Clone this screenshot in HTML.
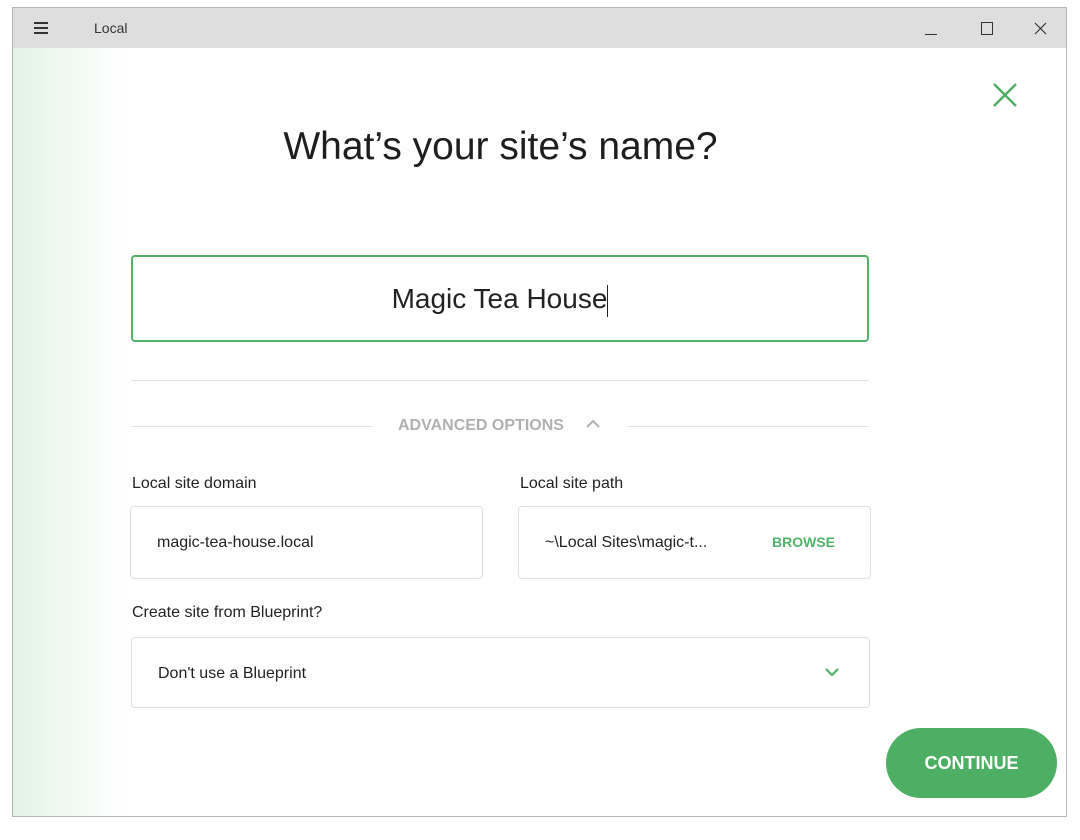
<!DOCTYPE html>
<html><head><style>
body{margin:0;width:1080px;height:840px;background:#fff;font-family:"Liberation Sans",sans-serif;position:relative;overflow:hidden}
.win{position:absolute;left:12px;top:7px;width:1055px;height:810px;border:1px solid #b5b5b5;box-sizing:border-box;background:#fff;overflow:hidden}
.tb{position:absolute;left:0;top:0;right:0;height:40px;background:#dedede}
.grad{position:absolute;left:0;top:40px;width:112px;bottom:0;background:linear-gradient(to right,#e3f3e6,#fff)}
.a{position:absolute}
.lbl{font-size:16px;color:#222}
.box{position:absolute;border:1px solid #e0e0e0;border-radius:4px;box-sizing:border-box;background:#fff}
</style></head><body>
<div class="win">
<div class="tb">
<div class="a" style="left:21px;top:14px;width:14px;height:2px;background:#333;box-shadow:0 5px 0 #333,0 10px 0 #333"></div>
<div class="a" style="left:81px;top:12px;font-size:14px;color:#333">Local</div>
<div class="a" style="left:912px;top:26px;width:12px;height:1px;background:#333"></div>
<div class="a" style="left:968px;top:14px;width:10px;height:11px;border:1px solid #333"></div>
<svg class="a" style="left:1021px;top:14px" width="13" height="13"><path d="M1 1L12 12M12 1L1 12" stroke="#333" stroke-width="1.2"/></svg>
</div>
<div class="grad"></div>
<svg class="a" style="left:979px;top:74px" width="26" height="26"><path d="M2 2L24 24M24 2L2 24" stroke="#4caf64" stroke-width="2.4"/></svg>
<div class="a" style="left:0;width:975px;text-align:center;top:117px;font-size:39px;color:#1e1e1e">What’s your site’s name?</div>
<div class="a" style="left:118px;top:247px;width:738px;height:87px;border:2px solid #51b36a;border-radius:4px;box-sizing:border-box;text-align:center;line-height:83px;font-size:28px;color:#222">Magic Tea House<span style="display:inline-block;width:1px;height:32px;background:#222;vertical-align:middle"></span></div>
<div class="a" style="left:118px;top:372px;width:738px;height:1px;background:#e2e2e2"></div>
<div class="a" style="left:118px;top:418px;width:241px;height:1px;background:#e2e2e2"></div>
<div class="a" style="left:615px;top:418px;width:241px;height:1px;background:#e2e2e2"></div>
<div class="a" style="left:385px;top:409px;font-size:16px;font-weight:bold;color:#b0b0b0">ADVANCED OPTIONS</div>
<svg class="a" style="left:572px;top:411px" width="16" height="10"><path d="M2 8L8 2L14 8" stroke="#b0b0b0" stroke-width="2" fill="none"/></svg>
<div class="a lbl" style="left:119px;top:467px">Local site domain</div>
<div class="a lbl" style="left:507px;top:467px">Local site path</div>
<div class="box" style="left:117px;top:498px;width:353px;height:73px"><span class="a lbl" style="left:26px;top:27px">magic-tea-house.local</span></div>
<div class="box" style="left:505px;top:498px;width:353px;height:73px"><span class="a lbl" style="left:26px;top:27px">~\Local Sites\magic-t...</span><span class="a" style="left:253px;top:27px;font-size:14px;font-weight:bold;color:#51b36a">BROWSE</span></div>
<div class="a lbl" style="left:119px;top:596px">Create site from Blueprint?</div>
<div class="box" style="left:118px;top:629px;width:739px;height:71px"><span class="a lbl" style="left:26px;top:27px">Don't use a Blueprint</span>
<svg class="a" style="left:692px;top:29px" width="16" height="10"><path d="M2 2L8 8L14 2" stroke="#51b36a" stroke-width="2.2" fill="none"/></svg></div>
<div class="a" style="left:873px;top:720px;width:171px;height:70px;border-radius:35px;background:#4caf64;color:#fff;font-weight:bold;font-size:18px;text-align:center;line-height:70px">CONTINUE</div>
</div>
</body></html>
